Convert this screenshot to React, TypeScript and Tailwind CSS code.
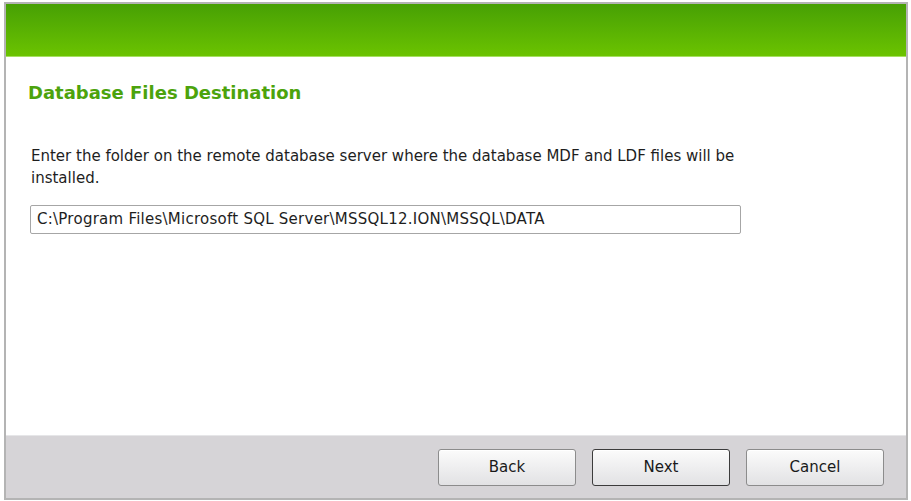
import React from 'react';

const buttons = ['Back', 'Next', 'Cancel'];

function WizardButton({ label, focused }: { label: string; focused?: boolean }) {
  return (
    <button
      className={`w-[138px] h-[37px] rounded-[3px] border bg-gradient-to-b from-[#fbfbfb] to-[#e2e2e4] text-[15px] text-[#1a1a1a] shadow-[inset_0_1px_0_#ffffff] ${
        focused ? 'border-[#3c3c3c]' : 'border-[#8c8c8c]'
      }`}
    >
      {label}
    </button>
  );
}

export default function App() {
  return (
    <div className="w-[911px] h-[501px] bg-white pt-[2px] pl-[4px] pr-[3px] pb-[1px] font-['DejaVu_Sans',sans-serif]">
      <div className="h-full flex flex-col border-2 border-[#b4b4b4]">
        <div className="h-[53px] bg-gradient-to-b from-[#47a004] to-[#6bc300] border-b border-[#a6e060]" />

        <div className="flex-1 bg-white pt-[25px] pl-[22px]">
          <h1 className="text-[18px] leading-[22px] font-bold text-[#4ca30c]">
            Database Files Destination
          </h1>
          <p className="mt-[41px] ml-[3px] w-[720px] text-[15px] leading-[22px] text-[#1e1e1e]">
            Enter the folder on the remote database server where the database MDF and LDF files will be installed.
          </p>
          <div className="mt-[16px] ml-[2px] w-[711px] h-[29px] border border-[#a6a6a6] rounded-[2px] flex items-center px-[6px] text-[15px] tracking-[0.25px] text-[#1e1e1e]">
            C:\Program Files\Microsoft SQL Server\MSSQL12.ION\MSSQL\DATA
          </div>
        </div>

        <div className="h-[63px] bg-[#d6d4d7] border-t border-[#e6e6e8] flex items-center justify-end gap-[16px] pr-[22px]">
          {buttons.map((b) => (
            <WizardButton key={b} label={b} focused={b === 'Next'} />
          ))}
        </div>
      </div>
    </div>
  );
}
